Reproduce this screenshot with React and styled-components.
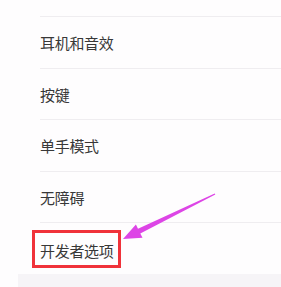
import React from "react";
import styled, { createGlobalStyle } from "styled-components";

const Global = createGlobalStyle`
  html, body { margin: 0; padding: 0; background: #fefdfe; }
  body { font-family: "Noto Sans CJK SC", "Noto Sans", sans-serif; }
`;

const Page = styled.div`
  position: relative;
  width: 281px;
  height: 287px;
  overflow: hidden;
  background: #fefdfe;
`;

const List = styled.div`
  display: flex;
  flex-direction: column;
`;

const TopStub = styled.div`
  height: 16px;
  margin-left: 40px;
  border-bottom: 1px solid #efedf0;
`;

const Row = styled.div`
  height: ${(p) => (p.$last ? "51px" : "50.5px")};
  display: flex;
  align-items: center;
  padding-left: ${(p) => (p.$highlight ? "32px" : "40px")};
  padding-top: ${(p) => (p.$highlight ? "0" : "2px")};
  box-sizing: border-box;
  position: relative;
  flex-shrink: 0;
  &::after {
    content: "";
    display: ${(p) => (p.$last ? "none" : "block")};
    position: absolute;
    left: 40px;
    right: 0;
    bottom: -1px;
    height: 1px;
    background: #efedf0;
  }
  margin-bottom: ${(p) => (p.$last ? "0" : "1px")};
`;

const Label = styled.span`
  font-size: 15px;
  line-height: 20px;
  color: #383838;
  letter-spacing: -0.3px;
`;

const Highlight = styled.div`
  display: flex;
  align-items: center;
  height: 38px;
  box-sizing: border-box;
  border: 3px solid #f0323a;
  padding: 4px 4px 0 5px;
`;

const Footer = styled.div`
  height: 13px;
  margin-left: 18px;
  background: #f6f4f7;
`;

const Arrow = styled.svg`
  position: absolute;
  left: 0;
  top: 0;
  pointer-events: none;
`;

const items = ["耳机和音效", "按键", "单手模式", "无障碍"];

export default function App() {
  const tip = [123, 239];
  const tail = [215, 194];
  const dx = tip[0] - tail[0];
  const dy = tip[1] - tail[1];
  const len = Math.hypot(dx, dy);
  const ux = dx / len, uy = dy / len;
  const nx = -uy, ny = ux;
  const headLen = 18;
  const bx = tip[0] - ux * headLen, by = tip[1] - uy * headLen;
  const hw = 7.5;
  const sw = 2.6;
  const tw = 0.6;
  const pts = [
    [tail[0] + nx * tw, tail[1] + ny * tw],
    [bx + nx * sw, by + ny * sw],
    [bx + nx * hw, by + ny * hw],
    tip,
    [bx - nx * hw, by - ny * hw],
    [bx - nx * sw, by - ny * sw],
    [tail[0] - nx * tw, tail[1] - ny * tw],
  ]
    .map((p) => p.map((v) => v.toFixed(1)).join(","))
    .join(" ");

  return (
    <Page>
      <Global />
      <List>
        <TopStub />
        {items.map((t) => (
          <Row key={t}>
            <Label>{t}</Label>
          </Row>
        ))}
        <Row $highlight $last>
          <Highlight>
            <Label>开发者选项</Label>
          </Highlight>
        </Row>
        <Footer />
      </List>
      <Arrow width="281" height="287" viewBox="0 0 281 287">
        <polygon points={pts} fill="#dd45e6" />
      </Arrow>
    </Page>
  );
}
